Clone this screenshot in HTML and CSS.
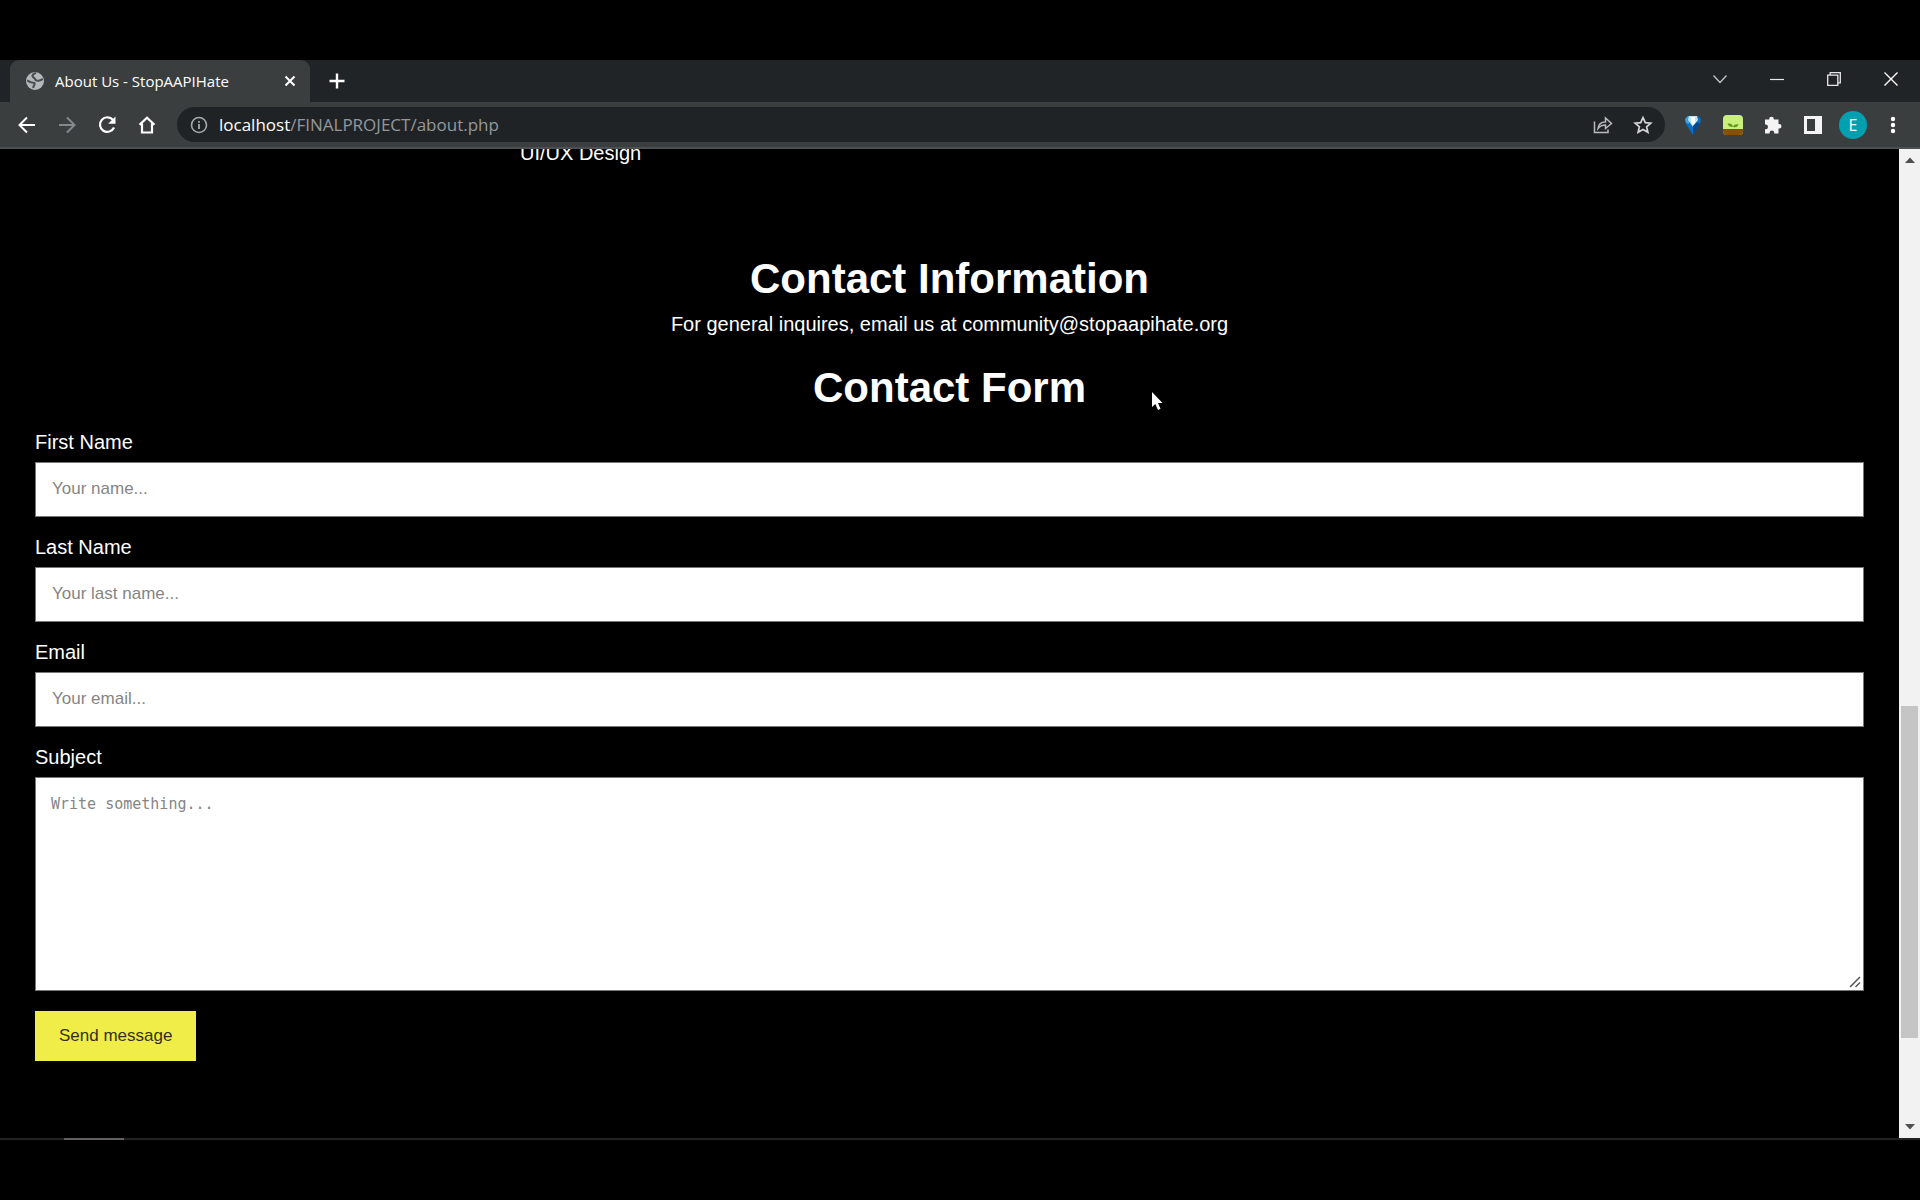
FILE: index.html
```html
<!DOCTYPE html>
<html lang="en">
<head>
    <meta charset="UTF-8">
    <meta name="viewport" content="width=device-width, initial-scale=1.0">
    <title>About Us - StopAAPIHate</title>
    <link rel="stylesheet" href="styles.css">
</head>
<body>
    <div class="browser">
        <header class="tab-strip">
            <div class="tab">
                <svg class="favicon" width="20" height="20" viewBox="0 0 20 20">
                    <circle cx="10" cy="10" r="9" fill="#b4b8ba"/>
                    <path d="M2 9.500c2 .5 3 2 5 2s3 .5 2.500 2-1.500 1.500-1 3.500M11 2c-2 .5-3.500 1.500-3.500 3s2 1.500 2.500 3 2.500 2 4.500 1.500S17 8 18 8.500" fill="none" stroke="#4a4f51" stroke-width="2.200"/>
                </svg>
                <span class="tab-title">About Us - StopAAPIHate</span>
                <button class="icon-btn tab-close" aria-label="Close tab">
                    <svg width="12" height="12" viewBox="0 0 12 12"><path d="M1.500 1.500l9 9M10.500 1.500l-9 9" stroke="#fff" stroke-width="2"/></svg>
                </button>
            </div>
            <button class="icon-btn new-tab" aria-label="New tab">
                <svg width="16" height="16" viewBox="0 0 16 16"><path d="M8 .5v15M.5 8h15" stroke="#fff" stroke-width="2.400"/></svg>
            </button>
            <div class="window-controls">
                <button class="icon-btn" aria-label="Search tabs">
                    <svg width="14" height="14" viewBox="0 0 14 14"><path d="M.5 3.500 7 10.500l6.500-7" fill="none" stroke="#c4c6c8" stroke-width="1.300"/></svg>
                </button>
                <button class="icon-btn" aria-label="Minimize">
                    <svg width="14" height="14" viewBox="0 0 14 14"><path d="M0 7.500h14" stroke="#e8e8e8" stroke-width="1.200"/></svg>
                </button>
                <button class="icon-btn" aria-label="Restore">
                    <svg width="14" height="14" viewBox="0 0 14 14"><path d="M.7 3.200h10.100v10.100H.7zM3.200 3V.7h10.100v10.100H11" fill="none" stroke="#e8e8e8" stroke-width="1.300"/></svg>
                </button>
                <button class="icon-btn" aria-label="Close window">
                    <svg width="14" height="14" viewBox="0 0 14 14"><path d="M.5.5l13 13M13.500.5l-13 13" stroke="#fff" stroke-width="1.400"/></svg>
                </button>
            </div>
        </header>

        <div class="toolbar">
            <button class="icon-btn" aria-label="Back">
                <svg width="20" height="20" viewBox="0 0 20 20"><path d="M18 10H3M10 2.500 2.500 10l7.500 7.500" fill="none" stroke="#fff" stroke-width="2"/></svg>
            </button>
            <button class="icon-btn" aria-label="Forward">
                <svg width="20" height="20" viewBox="0 0 20 20"><path d="M2 10h15M10 2.500l7.500 7.500-7.500 7.500" fill="none" stroke="#85898b" stroke-width="2"/></svg>
            </button>
            <button class="icon-btn" aria-label="Reload">
                <svg width="20" height="20" viewBox="0 0 20 20"><path d="M16 5A7.300 7.300 0 1 0 17 12.500" fill="none" stroke="#fff" stroke-width="2.200"/><path d="M18.500 1.500v7.300h-7.300z" fill="#fff"/></svg>
            </button>
            <button class="icon-btn" aria-label="Home">
                <svg width="20" height="20" viewBox="0 0 20 20"><path d="M2.500 9.800 10 2.800l7.500 7M5 8.500v9h10v-9" fill="none" stroke="#fff" stroke-width="2.200"/></svg>
            </button>
            <div class="address-bar">
                <svg width="18" height="18" viewBox="0 0 18 18"><circle cx="9" cy="9" r="7.500" fill="none" stroke="#a6a9ac" stroke-width="1.600"/><path d="M9 8v5M9 5v1.800" stroke="#a6a9ac" stroke-width="1.800"/></svg>
                <div class="url"><span class="host">localhost</span>/FINALPROJECT/about.php</div>
                <button class="icon-btn" aria-label="Share">
                    <svg width="20" height="20" viewBox="0 0 20 20"><path d="M1.500 6.500v11H15v-3M5 13.500c.5-4 3-6.500 7.500-6.500V3l6 5.500-6 5v-3.500c-3.500 0-5.500 1-7.500 3.500z" fill="none" stroke="#b8babc" stroke-width="1.500"/></svg>
                </button>
                <button class="icon-btn" aria-label="Bookmark this page">
                    <svg width="20" height="20" viewBox="0 0 20 20"><path d="M10 2.500l2.300 5.100 5.500.5-4.200 3.700 1.300 5.500-4.900-2.900-4.900 2.900 1.300-5.500-4.200-3.700 5.500-.5z" fill="none" stroke="#d2d4d6" stroke-width="1.700"/></svg>
                </button>
            </div>
            <div class="extensions">
                <button class="icon-btn" aria-label="Diamond extension">
                    <svg width="20" height="22" viewBox="0 0 20 22"><path d="M2 5l3-3h10l3 3-1 5-7 11L3 10z" fill="#0b6fc4"/><path d="M2 5l3-3h2l-1 8-3-1z" fill="#3aa0e8"/><path d="M6 2h8l1 4-5 7-5-7z" fill="#bfe3fb"/><path d="M8 3h4v5l-2 3-2-3z" fill="#fff"/><path d="M10 12v9l7-11-3-2z" fill="#064789"/></svg>
                </button>
                <button class="icon-btn" aria-label="Plant extension">
                    <svg width="22" height="22" viewBox="0 0 22 22"><rect x="1" y="1" width="20" height="20" rx="4" fill="#c8f07a"/><path d="M1 15h20v2a4 4 0 0 1-4 4H5a4 4 0 0 1-4-4z" fill="#865105"/><path d="M11 13c-3 0-5-1-5.500-3.500C8.500 9 10.500 10 11 13c.5-2 2.500-3 5.500-2.500C16 12.500 14 13.500 11 13z" fill="#61951d"/></svg>
                </button>
                <button class="icon-btn" aria-label="Extensions">
                    <svg width="20" height="20" viewBox="0 0 20 20"><path d="M6.200 4.500V4a2.300 2.300 0 0 1 4.600 0v.5H15.500V9h.7a2.300 2.300 0 0 1 0 4.600h-.7V18.500h-4.300v-.8a2.300 2.300 0 0 0-4.600 0v.8H2v-4.300h.7a2.300 2.300 0 0 0 0-4.600H2V4.500z" fill="#f4f4f4"/></svg>
                </button>
                <button class="icon-btn" aria-label="Side panel">
                    <svg width="20" height="20" viewBox="0 0 20 20"><path d="M1 1h18v18H1zM4 4v12h8V4z" fill="#f4f4f4" fill-rule="evenodd"/></svg>
                </button>
                <button class="icon-btn avatar" aria-label="Profile">E</button>
                <button class="icon-btn" aria-label="Menu">
                    <svg width="6" height="18" viewBox="0 0 6 18"><g fill="#fff"><circle cx="3" cy="3" r="2.200"/><circle cx="3" cy="9" r="2.200"/><circle cx="3" cy="15" r="2.200"/></g></svg>
                </button>
            </div>
        </div>

        <div class="viewport">
            <main class="page">
                <div class="team"><p>UI/UX Design</p></div>

                <section class="contact-info">
                    <h1>Contact Information</h1>
                    <p>For general inquires, email us at community@stopaapihate.org</p>
                </section>

                <h1>Contact Form</h1>
                <form class="contact-form">
                    <label for="fname">First Name</label>
                    <input type="text" id="fname" placeholder="Your name...">
                    <label for="lname">Last Name</label>
                    <input type="text" id="lname" placeholder="Your last name...">
                    <label for="email">Email</label>
                    <input type="text" id="email" placeholder="Your email...">
                    <label for="subject">Subject</label>
                    <div class="message-box">
                        <textarea id="subject" placeholder="Write something..."></textarea>
                        <svg class="grip" width="12" height="12" viewBox="0 0 12 12"><path d="M1 11 11 1M6.500 11 11 6.500" stroke="#555" stroke-width="1.500"/></svg>
                    </div>
                    <button type="button" class="send-btn">Send message</button>
                </form>

                <svg class="cursor" width="12" height="20" viewBox="0 0 12 20"><path d="M1 1v15l3.300-3 2.700 6 2.500-1.200L7 12h4.500z" fill="#fff"/></svg>
            </main>
            <div class="scrollbar">
                <svg width="10" height="6" viewBox="0 0 10 6"><path d="M0 6l5-5.500L10 6z" fill="#505050"/></svg>
                <div class="track"><div class="thumb"></div></div>
                <svg width="10" height="6" viewBox="0 0 10 6"><path d="M0 0l5 5.500L10 0z" fill="#505050"/></svg>
            </div>
        </div>
        <div class="taskbar-edge"><div class="taskbar-item"></div></div>
    </div>
</body>
</html>
```
FILE: styles.css
```css
* {
    margin: 0;
    padding: 0;
    box-sizing: border-box;
}

body {
    min-height: 100vh;
    padding: 60px 0;
    background: #000;
    color: #fff;
    font-family: "Liberation Sans", Arial, sans-serif;
    font-size: 20px;
    display: flex;
}

.browser {
    flex: 1;
    display: flex;
    flex-direction: column;
}

.icon-btn {
    border: none;
    background: none;
    color: #fff;
    display: flex;
    align-items: center;
    justify-content: center;
}

/* tab strip */
.tab-strip {
    height: 42px;
    padding-left: 10px;
    background: #212427;
    display: flex;
    align-items: center;
}

.tab {
    width: 300px;
    height: 42px;
    padding: 0 14px 0 15px;
    border-radius: 9px 9px 0 0;
    background: #3a3e3f;
    font-family: "Open Sans", "Noto Sans", sans-serif;
    font-size: 15px;
    display: flex;
    align-items: center;
    gap: 10px;
}

.tab-title {
    flex: 1;
    white-space: nowrap;
}

.new-tab {
    margin-left: 19px;
}

.window-controls {
    margin-left: auto;
    padding: 0 22px 4px 0;
    display: flex;
    gap: 43px;
}

/* toolbar */
.toolbar {
    height: 47px;
    padding: 0 13px 0 17px;
    border-bottom: 2px solid #4c5052;
    background: #3a3e3f;
    display: flex;
    align-items: center;
    gap: 20px;
}

.address-bar {
    flex: 1;
    height: 35px;
    padding: 0 12px 0 13px;
    border-radius: 18px;
    background: #202326;
    display: flex;
    align-items: center;
    gap: 20px;
}

.url {
    flex: 1;
    margin-left: -9px;
    color: #94989b;
    font-family: "Open Sans", "Noto Sans", sans-serif;
    font-size: 17px;
}

.host {
    color: #fff;
}

.extensions {
    margin-left: -6px;
    display: flex;
    align-items: center;
    gap: 12px;
}

.extensions .icon-btn {
    width: 28px;
    height: 28px;
}

.extensions .avatar {
    border-radius: 50%;
    background: #00a0b0;
    font-family: "Open Sans", "Noto Sans", sans-serif;
    font-size: 16px;
}

/* page */
.viewport {
    flex: 1;
    display: flex;
}

.page {
    flex: 1;
    position: relative;
    padding: 0 35px;
}

.team {
    height: 16px;
    padding-left: 485px;
    overflow: hidden;
    display: flex;
    align-items: flex-end;
}

.team p {
    line-height: 24px;
}

h1 {
    font-size: 42px;
    line-height: 50px;
    text-align: center;
}

.contact-info {
    margin: 89px 0 19px;
    text-align: center;
}

.contact-info p {
    line-height: 40px;
}

.contact-form {
    padding-top: 17px;
}

.contact-form label {
    display: block;
    margin-bottom: 8px;
    line-height: 24px;
}

.contact-form input,
.contact-form textarea {
    display: block;
    width: 100%;
    border: 1px solid #777;
    background: #fff;
}

.contact-form input {
    height: 55px;
    margin-bottom: 18px;
    padding: 0 16px 2px;
    font-family: inherit;
    font-size: 17px;
}

.message-box {
    position: relative;
    margin-bottom: 20px;
}

.contact-form textarea {
    height: 214px;
    padding: 17px 15px;
    font-family: "DejaVu Sans Mono", Consolas, monospace;
    font-size: 15px;
    resize: none;
}

.grip {
    position: absolute;
    right: 3px;
    bottom: 3px;
}

.contact-form ::placeholder {
    color: #858585;
}

.send-btn {
    height: 50px;
    padding: 0 24px;
    border: none;
    background: #f0ed48;
    color: #33301a;
    font-family: inherit;
    font-size: 17px;
}

.cursor {
    position: absolute;
    left: 1151px;
    top: 242px;
}

/* scrollbar */
.scrollbar {
    width: 21px;
    padding: 8px 0;
    background: #f2f2f2;
    display: flex;
    flex-direction: column;
    align-items: center;
}

.track {
    flex: 1;
    width: 17px;
    display: flex;
    flex-direction: column;
    justify-content: flex-end;
    padding-bottom: 86px;
}

.thumb {
    height: 38%;
    background: #c5c5c5;
}

.taskbar-edge {
    height: 2px;
    padding-left: 64px;
    background: #222;
}

.taskbar-item {
    width: 60px;
    height: 2px;
    background: #666062;
}
```
